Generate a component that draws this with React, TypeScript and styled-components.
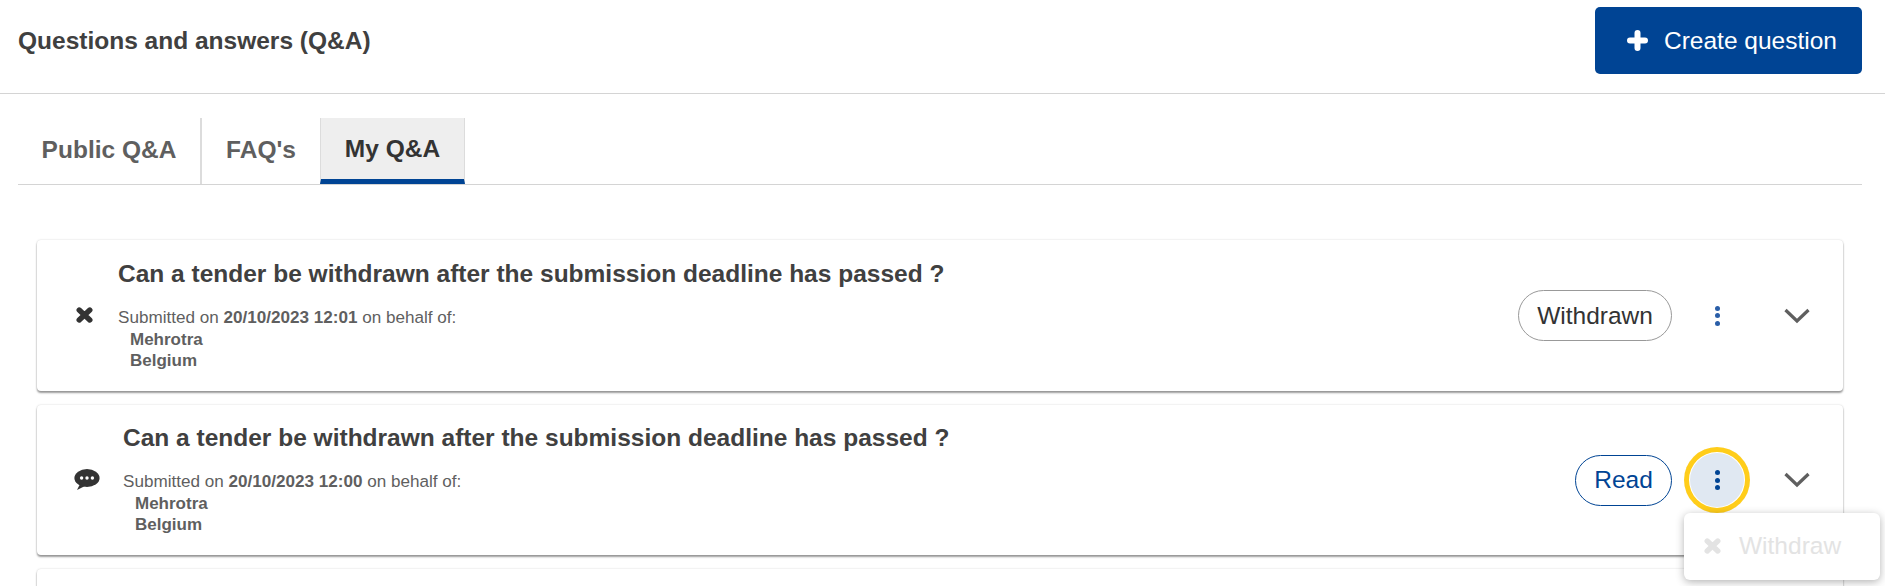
import { createGlobalStyle } from 'styled-components';
import styled from 'styled-components';

const blue = '#004494';

const GlobalStyle = createGlobalStyle`
  html, body {
    margin: 0;
    padding: 0;
    background: #fff;
    font-family: 'Liberation Sans', Arial, sans-serif;
  }
`;

const Page = styled.div`
  width: 1885px;
  height: 586px;
  overflow: hidden;
  position: relative;
`;

const Header = styled.header`
  display: flex;
  align-items: center;
  justify-content: space-between;
  padding: 0 23px 12px 18px;
  border-bottom: 1px solid #d4d4d4;
  height: 81px;
`;

const Title = styled.h1`
  margin: 0;
  color: #404040;
  font-size: 24.5px;
  font-weight: 700;
`;

const CreateButton = styled.button`
  display: flex;
  align-items: center;
  gap: 16px;
  width: 267px;
  height: 67px;
  padding: 0 0 0 32px;
  box-sizing: border-box;
  border: 0;
  border-radius: 5px;
  background: ${blue};
  color: #fff;
  font: 400 24.5px 'Liberation Sans', Arial, sans-serif;
`;

const Tabs = styled.nav`
  display: flex;
  height: 66px;
  margin: 24px 23px 0 18px;
  border-bottom: 1px solid #d4d4d4;
`;

const Tab = styled.div<{ $active?: boolean; $divider?: boolean; $width: number }>`
  display: flex;
  align-items: center;
  justify-content: center;
  box-sizing: border-box;
  width: ${(p) => p.$width}px;
  height: 66px;
  font-size: 24.5px;
  font-weight: 700;
  color: ${(p) => (p.$active ? '#333' : '#5f5f5f')};
  background: ${(p) => (p.$active ? '#eee' : 'transparent')};
  border-right: ${(p) => (p.$divider ? '2px solid #dcdcdc' : p.$active ? '1px solid #dcdcdc' : '0')};
  border-left: ${(p) => (p.$active ? '1px solid #dcdcdc' : '0')};
  border-bottom: ${(p) => (p.$active ? `5px solid ${blue}` : '0')};
  padding-bottom: ${(p) => (p.$active ? '0' : '3px')};
`;

const List = styled.div`
  display: flex;
  flex-direction: column;
  gap: 14px;
  margin: 55px 42px 0 37px;
`;

const Card = styled.article<{ $height?: number }>`
  display: flex;
  align-items: center;
  box-sizing: border-box;
  height: ${(p) => p.$height ?? 151}px;
  flex-shrink: 0;
  border-radius: 4px;
  background: #fff;
  box-shadow: 0 0 2px rgba(0, 0, 0, 0.18), 0 2px 2px rgba(0, 0, 0, 0.38);
`;

const StatusIcon = styled.div<{ $wide?: boolean }>`
  display: flex;
  justify-content: center;
  box-sizing: border-box;
  width: ${(p) => (p.$wide ? '86px' : '81px')};
  padding: 0 0 2px 13px;
`;

const Body = styled.div`
  flex: 1;
  padding-bottom: 2px;
`;

const Question = styled.h2`
  margin: 0 0 17px;
  color: #404040;
  font-size: 24.5px;
  line-height: 30px;
  font-weight: 700;
`;

const Meta = styled.div`
  color: #5f5f5f;
  font-size: 17.1px;
  line-height: 23px;
`;

const Behalf = styled.div`
  margin-left: 12px;
  font-size: 17px;
  font-weight: 700;
  line-height: 21px;
`;

const Actions = styled.div`
  display: flex;
  align-items: center;
  padding-right: 33px;
`;

const Pill = styled.div<{ $read?: boolean }>`
  display: flex;
  align-items: center;
  justify-content: center;
  box-sizing: border-box;
  height: 51px;
  width: ${(p) => (p.$read ? '97px' : '154px')};
  border: 1px solid ${(p) => (p.$read ? blue : '#999')};
  border-radius: 26px;
  color: ${(p) => (p.$read ? blue : '#333')};
  font-size: 24.5px;
`;

const Kebab = styled.div<{ $focused?: boolean }>`
  display: flex;
  flex-direction: column;
  align-items: center;
  justify-content: center;
  gap: 2.5px;
  box-sizing: border-box;
  width: 66px;
  height: 66px;
  margin: 0 34px 0 12px;
  border-radius: 50%;
  background: ${(p) => (p.$focused ? '#e0e8f2' : 'transparent')};
  box-shadow: ${(p) => (p.$focused ? 'inset 0 0 0 5px #ffcd1a, inset 0 0 0 6px #fff' : 'none')};
  color: ${(p) => (p.$focused ? blue : '#2a5ea8')};
`;

const Dot = styled.span`
  width: 5px;
  height: 5px;
  border-radius: 50%;
  background: currentColor;
`;

const Chevron = styled.svg`
  width: 26px;
  height: 16px;
  fill: none;
  stroke: #5f5f5f;
  stroke-width: 3.2;
`;

const Glyph = styled.svg`
  display: block;
  flex-shrink: 0;
`;

const Menu = styled.div`
  position: absolute;
  left: 1684px;
  top: 513px;
  display: flex;
  align-items: center;
  gap: 18px;
  box-sizing: border-box;
  width: 196px;
  height: 67px;
  padding: 0 0 2px 20px;
  border-radius: 6px;
  background: #fff;
  box-shadow: 0 2px 8px rgba(0, 0, 0, 0.3);
  color: #e3e3e3;
  font-size: 24.5px;
`;

function CrossIcon({ color }: { color: string }) {
  return (
    <Glyph width="17" height="16" viewBox="0 0 17 16" fill="none" stroke={color} strokeWidth="5.4" strokeLinecap="round">
      <path d="M3.2 3 L13.8 13 M13.8 3 L3.2 13" />
    </Glyph>
  );
}

function PlusIcon() {
  return (
    <Glyph width="21" height="21" viewBox="0 0 21 21" fill="none" stroke="#fff" strokeWidth="6" strokeLinecap="round">
      <path d="M10.5 3 V18 M3 10.5 H18" />
    </Glyph>
  );
}

function BubbleIcon() {
  return (
    <Glyph width="26" height="21" viewBox="0 0 26 21" fill="#333">
      <ellipse cx="13" cy="9" rx="12.6" ry="9" />
      <path d="M6 15 L3 21 L11 17 Z" />
      <circle cx="7.6" cy="9" r="1.7" fill="#fff" />
      <circle cx="13" cy="9" r="1.7" fill="#fff" />
      <circle cx="18.4" cy="9" r="1.7" fill="#fff" />
    </Glyph>
  );
}

function Row({
  date,
  status,
  focused,
  wide,
  height,
  icon,
}: {
  date: string;
  status: string;
  focused?: boolean;
  wide?: boolean;
  height?: number;
  icon: React.ReactNode;
}) {
  return (
    <Card $height={height}>
      <StatusIcon $wide={wide}>{icon}</StatusIcon>
      <Body>
        <Question>Can a tender be withdrawn after the submission deadline has passed ?</Question>
        <Meta>
          Submitted on <b>{date}</b> on behalf of:
          <Behalf>
            Mehrotra
            <br />
            Belgium
          </Behalf>
        </Meta>
      </Body>
      <Actions>
        <Pill $read={status === 'Read'}>{status}</Pill>
        <Kebab $focused={focused}>
          <Dot />
          <Dot />
          <Dot />
        </Kebab>
        <Chevron viewBox="0 0 26 16">
          <polyline points="1.5,2 13,13 24.5,2" />
        </Chevron>
      </Actions>
    </Card>
  );
}

export default function App() {
  return (
    <Page>
      <GlobalStyle />
      <Header>
        <Title>Questions and answers (Q&amp;A)</Title>
        <CreateButton>
          <PlusIcon />
          Create question
        </CreateButton>
      </Header>
      <Tabs>
        <Tab $divider $width={184}>
          Public Q&amp;A
        </Tab>
        <Tab $width={118}>FAQ's</Tab>
        <Tab $active $width={145}>
          My Q&amp;A
        </Tab>
      </Tabs>
      <List>
        <Row date="20/10/2023 12:01" status="Withdrawn" icon={<CrossIcon color="#333" />} />
        <Row date="20/10/2023 12:00" status="Read" wide focused height={150} icon={<BubbleIcon />} />
        <Card />
      </List>
      <Menu>
        <CrossIcon color="#e3e3e3" />
        Withdraw
      </Menu>
    </Page>
  );
}
